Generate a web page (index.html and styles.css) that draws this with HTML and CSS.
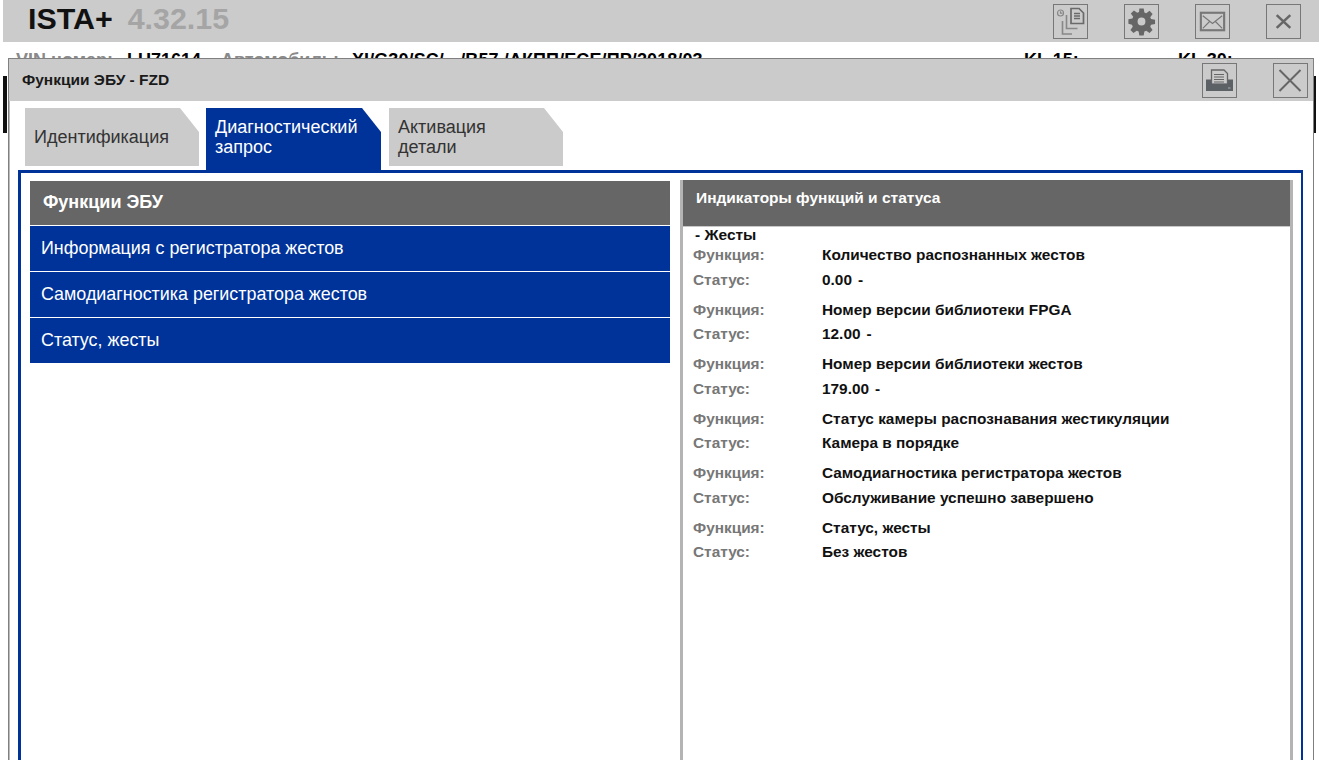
FILE: index.html
```html
<!DOCTYPE html>
<html lang="ru">
<head>
<meta charset="utf-8">
<title>ISTA+</title>
<link rel="stylesheet" href="styles.css">
</head>
<body>
<div class="app">
  <header class="topbar">
    <div class="brand"><span class="brand-name">ISTA+</span><span class="brand-ver">4.32.15</span></div>
    <div class="top-actions">
      <button class="icon-btn"><svg viewBox="0 0 33 33" width="33" height="33" fill="none" stroke="#888" stroke-width="1.200"><circle cx="6.500" cy="8" r="3"/><path d="M6.500 6.200v2h1.800"/><path d="M17 3.500h8l4.500 4.500v10.500H17z" stroke="#6a6a6a" stroke-width="1.700"/><path d="M20 8.500h6M20 11h6M20 13.500h6" stroke="#6a6a6a" stroke-width="1.500"/><path d="M12.500 10v13.500h11M8.500 16v13h9.500" stroke-width="1.600"/></svg></button>
      <button class="icon-btn"><svg viewBox="0 0 34 34" width="33" height="33"><path fill="#666" fill-rule="evenodd" d="M14.500 2h5l.8 4.600 2.100.9 3.800-2.700 3.500 3.500-2.700 3.800.9 2.100 4.600.8v5l-4.600.8-.9 2.100 2.700 3.800-3.500 3.500-3.800-2.700-2.100.9-.8 4.600h-5l-.8-4.600-2.100-.9-3.800 2.700-3.500-3.500 2.700-3.800-.9-2.100L2 19.500v-5l4.600-.8.9-2.100-2.700-3.800L8.300 4.300l3.800 2.700 2.100-.9zM17 12.500a4.500 4.500 0 1 0 0 9 4.500 4.500 0 0 0 0-9z" transform="translate(1.700 1.700) scale(.9)"/></svg></button>
      <button class="icon-btn"><svg viewBox="0 0 34 34" width="33" height="33" fill="none" stroke="#777"><rect x="5" y="8" width="24" height="18" stroke-width="2.200"/><path d="M7 11l10 8 10-8M7 24l7-7M27 24l-7-7" stroke-width="1.200"/></svg></button>
      <button class="icon-btn"><svg viewBox="0 0 34 34" width="33" height="33" fill="none" stroke="#666" stroke-width="2.600"><path d="M10 10.500l14 13M24 10.500l-14 13"/></svg></button>
    </div>
  </header>
  <div class="vehicle">
    <span class="vehicle-main"><span class="muted">VIN номер:</span><b class="v-vin">LU71614</b><span class="muted">Автомобиль:</span><b class="v-car">XI/G30/SC/ - /B57 /АКПП/ECE/ПР/2018/03</b></span>
    <span class="kl kl15">KL 15:</span><span class="kl">KL 30:</span>
  </div>
  <div class="backdrop-frame"></div>
</div>

<section class="modal">
  <div class="modal-head">
    <h1 class="modal-title">Функции ЭБУ - FZD</h1>
    <div class="modal-actions">
      <button class="icon-btn"><svg viewBox="0 0 33 33" width="33" height="33"><path d="M3 15.500h5v4h17v-4h5v11.500H3z" fill="#5c6166"/><path d="M8.500 6h12.500l3.500 3.500v11h-16z" fill="#cbcbcb" stroke="#666" stroke-width="1.300"/><path d="M11 10.500h10M11 13h10M11 15.500h10M11 18h10" stroke="#666" stroke-width="1.200"/><path d="M4 20.500h25" stroke="#5c6166" stroke-width="2"/><path d="M25 24h2.500" stroke="#aaa" stroke-width="1"/></svg></button>
      <button class="icon-btn"><svg viewBox="0 0 33 33" width="33" height="33" fill="none" stroke="#666" stroke-width="2"><path d="M5.500 6l21 21M26.500 6l-21 21"/></svg></button>
    </div>
  </div>
  <div class="modal-body">
    <nav class="tabs">
      <div class="tab tab-id">Идентификация</div>
      <div class="tab tab-diag is-active">Диагностический запрос</div>
      <div class="tab tab-act">Активация детали</div>
    </nav>
    <div class="frame">
      <div class="col-left">
        <div class="left-head">Функции ЭБУ</div>
        <div class="left-item">Информация с регистратора жестов</div>
        <div class="left-item">Самодиагностика регистратора жестов</div>
        <div class="left-item">Статус, жесты</div>
      </div>
      <div class="col-right">
        <div class="right-head">Индикаторы функций и статуса</div>
        <div class="group-title">- Жесты</div>
        <dl class="group"><dt>Функция:</dt><dd>Количество распознанных жестов</dd><dt>Статус:</dt><dd>0.00<span class="unit">-</span></dd></dl>
        <dl class="group"><dt>Функция:</dt><dd>Номер версии библиотеки FPGA</dd><dt>Статус:</dt><dd>12.00<span class="unit">-</span></dd></dl>
        <dl class="group"><dt>Функция:</dt><dd>Номер версии библиотеки жестов</dd><dt>Статус:</dt><dd>179.00<span class="unit">-</span></dd></dl>
        <dl class="group"><dt>Функция:</dt><dd>Статус камеры распознавания жестикуляции</dd><dt>Статус:</dt><dd>Камера в порядке</dd></dl>
        <dl class="group"><dt>Функция:</dt><dd>Самодиагностика регистратора жестов</dd><dt>Статус:</dt><dd>Обслуживание успешно завершено</dd></dl>
        <dl class="group"><dt>Функция:</dt><dd>Статус, жесты</dd><dt>Статус:</dt><dd>Без жестов</dd></dl>
      </div>
    </div>
  </div>
</section>
</body>
</html>
```
FILE: styles.css
```css
* { box-sizing: border-box; }
html, body { margin: 0; height: 100%; overflow: hidden; background: #fff; }
body { font-family: "Liberation Sans", Arial, sans-serif; color: #000; }
.app { width: 1330px; height: 760px; }

.topbar {
  width: 1316px; height: 42px; margin-left: 3px; background: #cbcbcb;
  display: flex; align-items: center; justify-content: space-between; padding-left: 25px;
}
.brand { display: flex; align-items: baseline; gap: 15px; font-weight: 700; font-size: 30.400px; margin-top: -6px; }
.brand-name { color: #111; }
.brand-ver { color: #a5a5a5; }
.top-actions { display: flex; gap: 36px; padding-right: 18px; }
.icon-btn {
  width: 35px; height: 35px; padding: 0; border: 1px solid #777; background: #cbcbcb;
  display: flex; align-items: center; justify-content: center;
}

.vehicle { display: flex; height: 16px; margin-top: 9px; padding-left: 16px; font-size: 18px; font-weight: 700; line-height: 18px; white-space: nowrap; }
.vehicle-main { width: 1008px; }
.muted { color: #8a8a8a; }
.v-vin { margin: 0 20px 0 14px; }
.v-car { margin-left: 13px; letter-spacing: .1px; }
.kl15 { width: 154px; }

.backdrop-frame { width: 1313px; height: 57px; margin: 9px 0 0 3px; border-left: 4px solid #111; border-right: 3px solid #111; }

.modal {
  position: absolute; left: 8px; top: 58px; width: 1306px; height: 720px;
  background: #fff; border: 1px solid #808080; border-bottom: 0; display: flex; flex-direction: column;
}
.modal-head { height: 42px; background: #cbcbcb; display: flex; align-items: center; justify-content: space-between; padding: 0 5px 0 13px; flex: none; }
.modal-title { margin: 0; font-size: 15.500px; font-weight: 700; color: #1a1a1a; }
.modal-actions { display: flex; gap: 36px; }
.modal-body { flex: 1; display: flex; flex-direction: column; padding: 7px 10px 0 8px; border-left: 1px solid #bbb; }

.tabs { display: flex; align-items: flex-start; padding-left: 7px; height: 62px; flex: none; }
.tab {
  height: 58px; background: #cbcbcb; color: #333; font-size: 18px; line-height: 20px;
  padding: 9px 9px 0; clip-path: polygon(0 0, calc(100% - 19px) 0, 100% 24px, 100% 100%, 0 100%);
}
.tab-id { width: 174px; display: flex; align-items: center; padding-top: 0; }
.tab-diag { width: 175px; margin-left: 7px; }
.tab-act { width: 174px; margin-left: 8px; padding-right: 50px; }
.is-active { background: #003399; color: #fff; height: 63px; }

.frame { flex: 1; display: flex; border: solid #003399; border-width: 3px 2px 0 3px; padding: 8px 9px 0; gap: 10px; position: relative; }
.col-left { width: 640px; flex: none; }
.left-head { height: 44px; background: #666; color: #fff; font-size: 18px; font-weight: 700; line-height: 42px; padding-left: 13px; }
.left-item { height: 45px; margin-top: 1px; background: #003399; color: #fff; font-size: 17.900px; line-height: 45px; padding-left: 11px; }

.col-right { width: 613px; flex: none; margin-top: -1px; border: solid #b4b4b4; border-width: 0 3px 0 3px; }
.right-head { height: 46px; margin-bottom: 1px; background: #666; color: #fff; font-size: 15.500px; font-weight: 700; line-height: 35px; padding-left: 13px; box-shadow: 0 1px 0 #c8c8c8; }
.group-title { font-size: 15.500px; font-weight: 700; line-height: 16px; padding-left: 12px; color: #111; }
.group { display: grid; grid-template-columns: 129px 1fr; grid-auto-rows: 24.600px; margin: 0 0 5.400px; padding-left: 10px; font-size: 15.400px; font-weight: 700; line-height: 24.600px; }
.group dt { color: #777; }
.group dd { margin: 0; color: #111; }
.unit { margin-left: 6px; }
```
